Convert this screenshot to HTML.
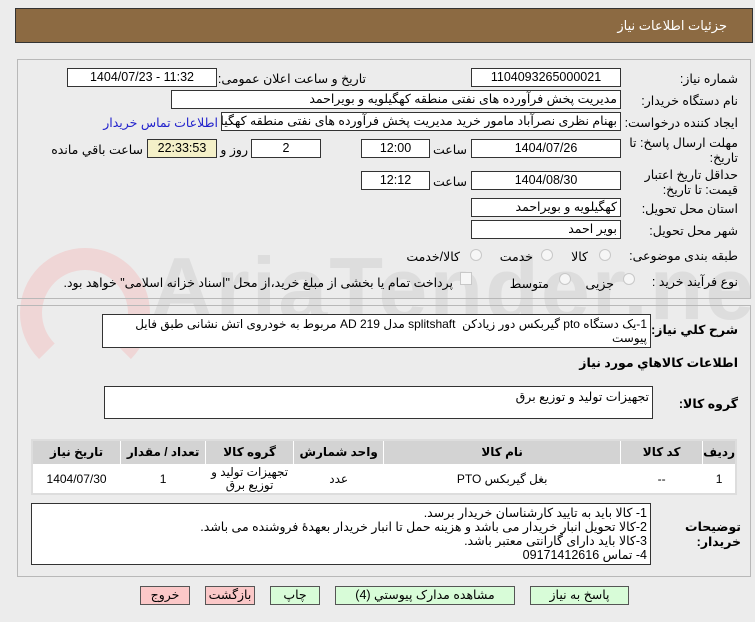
<!DOCTYPE html>
<html><head><meta charset="utf-8"><style>
*{margin:0;padding:0;box-sizing:border-box}
body{width:755px;height:622px;background:#ececec;font-family:"Liberation Sans","DejaVu Sans",sans-serif;font-size:12px;color:#000;position:relative;overflow:hidden}
.a{position:absolute}
.box{position:absolute;background:#fff;border:1px solid #333;height:19px;line-height:17px;text-align:center;font-size:12.5px;white-space:nowrap;overflow:hidden}
.r{text-align:right;padding-right:3px;direction:rtl}
.lbl{position:absolute;direction:rtl;white-space:nowrap;font-size:12.5px}
.panel{position:absolute;border:1px solid #b8b8b8;left:17px;width:734px}
.rad{position:absolute;width:12px;height:12px;border-radius:50%;border:1px solid #c8c8c8;background:#f6f6f6}
.btn{position:absolute;top:586px;height:19px;border:1px solid #555;line-height:17px;text-align:center;font-size:12.5px;direction:rtl}
th,td{border:1px solid #fff}
</style></head><body>
<div class="a" style="left:15px;top:8px;width:738px;height:35px;background:#8c6a42;border:1px solid #333"></div>
<div class="lbl" style="right:28px;top:18px;color:#fff;font-size:13px">جزئیات اطلاعات نیاز</div>

<!-- watermark -->
<div class="a" style="left:20px;top:248px;width:130px;height:130px;border:22px solid #efd6d6;border-radius:50%;border-bottom-color:transparent"></div>
<div class="a" style="left:150px;top:238px;font-size:88px;font-weight:bold;color:#dddddd;letter-spacing:2px">AriaTender.net</div>

<div class="panel" style="top:59px;height:240px"></div>
<div class="panel" style="top:305px;height:272px"></div>

<div class="lbl" style="right:17px;top:71px">شماره نیاز:</div>
<div class="box" style="left:471px;top:68px;width:150px">1104093265000021</div>
<div class="lbl" style="right:389px;top:71px">تاریخ و ساعت اعلان عمومی:</div>
<div class="box" style="left:67px;top:68px;width:150px">1404/07/23 - 11:32</div>

<div class="lbl" style="right:17px;top:93px">نام دستگاه خریدار:</div>
<div class="box r" style="left:171px;top:90px;width:450px">مدیریت پخش فرآورده های نفتی منطقه کهگیلویه و بویراحمد</div>

<div class="lbl" style="right:17px;top:115px">ایجاد کننده درخواست:</div>
<div class="box r" style="left:221px;top:112px;width:400px">بهنام نظری نصرآباد مامور خرید مدیریت پخش فرآورده های نفتی منطقه کهگیلویه</div>
<div class="lbl" style="right:537px;top:115px;color:#2222cc">اطلاعات تماس خریدار</div>

<div class="lbl" style="right:17px;top:136px;line-height:15px;text-align:right">مهلت ارسال پاسخ: تا<br>تاریخ:</div>
<div class="box" style="left:471px;top:139px;width:150px">1404/07/26</div>
<div class="lbl" style="right:288px;top:142px">ساعت</div>
<div class="box" style="left:361px;top:139px;width:69px">12:00</div>
<div class="box" style="left:251px;top:139px;width:70px">2</div>
<div class="lbl" style="right:507px;top:142px">روز و</div>
<div class="box" style="left:147px;top:139px;width:70px;background:#f4f0c8">22:33:53</div>
<div class="lbl" style="right:612px;top:142px">ساعت باقي مانده</div>

<div class="lbl" style="right:17px;top:168px;line-height:15px;text-align:right">حداقل تاریخ اعتبار<br>قیمت: تا تاریخ:</div>
<div class="box" style="left:471px;top:171px;width:150px">1404/08/30</div>
<div class="lbl" style="right:288px;top:174px">ساعت</div>
<div class="box" style="left:361px;top:171px;width:69px">12:12</div>

<div class="lbl" style="right:17px;top:201px">استان محل تحویل:</div>
<div class="box r" style="left:471px;top:198px;width:150px">کهگیلویه و بویراحمد</div>
<div class="lbl" style="right:17px;top:223px">شهر محل تحویل:</div>
<div class="box r" style="left:471px;top:220px;width:150px">بویر احمد</div>

<div class="lbl" style="right:17px;top:248px">طبقه بندی موضوعی:</div>
<div class="rad" style="left:599px;top:249px"></div><div class="lbl" style="right:167px;top:249px">کالا</div>
<div class="rad" style="left:541px;top:249px"></div><div class="lbl" style="right:222px;top:249px">خدمت</div>
<div class="rad" style="left:470px;top:249px"></div><div class="lbl" style="right:295px;top:249px">کالا/خدمت</div>

<div class="lbl" style="right:17px;top:274px">نوع فرآیند خرید :</div>
<div class="rad" style="left:623px;top:273px"></div><div class="lbl" style="right:141px;top:276px">جزیی</div>
<div class="rad" style="left:559px;top:273px"></div><div class="lbl" style="right:206px;top:276px">متوسط</div>
<div class="a" style="left:460px;top:272px;width:12px;height:13px;border:1px solid #c8c8c8;background:#f6f6f6"></div>
<div class="lbl" style="right:302px;top:275px">پرداخت تمام یا بخشی از مبلغ خرید،از محل "اسناد خزانه اسلامی" خواهد بود.</div>

<div class="lbl" style="right:17px;top:322px;font-weight:bold">شرح كلي نياز:</div>
<div class="box r" style="left:102px;top:314px;width:549px;height:34px;line-height:14px;white-space:normal;text-align:right;padding:2px 3px 0 18px;font-size:12px">1-یک دستگاه pto گیربکس دور زیادکن&nbsp; splitshaft مدل AD 219 مربوط به خودروی اتش نشانی طبق فایل پیوست</div>
<div class="lbl" style="right:17px;top:355px;font-weight:bold">اطلاعات كالاهاي مورد نياز</div>
<div class="lbl" style="right:17px;top:396px;font-weight:bold">گروه کالا:</div>
<div class="box r" style="left:104px;top:386px;width:549px;height:33px;text-align:right;padding-top:2px">تجهیزات تولید و توزیع برق</div>

<table class="a" style="left:31px;top:439px;width:706px;height:56px;border-collapse:collapse;direction:rtl;background:#f4f4f4;font-size:12px;text-align:center;border:2px solid #ddd">
<tr style="background:#d3d3d3;height:24px;font-weight:bold"><th style="width:29px">ردیف</th><th style="width:82px">کد کالا</th><th style="width:237px">نام کالا</th><th style="width:90px">واحد شمارش</th><th style="width:88px">گروه کالا</th><th style="width:85px">تعداد / مقدار</th><th>تاریخ نیاز</th></tr>
<tr style="background:#fff"><td>1</td><td>--</td><td>بغل گیربکس PTO</td><td>عدد</td><td style="line-height:13px">تجهیزات تولید و توزیع برق</td><td>1</td><td>1404/07/30</td></tr>
</table>

<div class="lbl" style="right:14px;top:520px;font-weight:bold;line-height:15px;text-align:right">توضیحات<br>خریدار:</div>
<div class="box r" style="left:31px;top:503px;width:620px;height:62px;line-height:14px;text-align:right;padding-top:2px;white-space:normal">1- کالا باید به تایید کارشناسان خریدار برسد.<br>2-کالا تحویل انبار خریدار می باشد و هزینه حمل تا انبار خریدار بعهدهٔ فروشنده می باشد.<br>3-کالا باید دارای گارانتی معتبر باشد.<br>4- تماس 09171412616</div>

<div class="btn" style="left:140px;width:50px;background:#fbc8c8">خروج</div>
<div class="btn" style="left:205px;width:50px;background:#fbc8c8">بازگشت</div>
<div class="btn" style="left:270px;width:50px;background:#d8fcd8">چاپ</div>
<div class="btn" style="left:335px;width:180px;background:#d8fcd8">مشاهده مدارک پیوستي (4)</div>
<div class="btn" style="left:530px;width:99px;background:#d8fcd8">پاسخ به نیاز</div>
</body></html>
